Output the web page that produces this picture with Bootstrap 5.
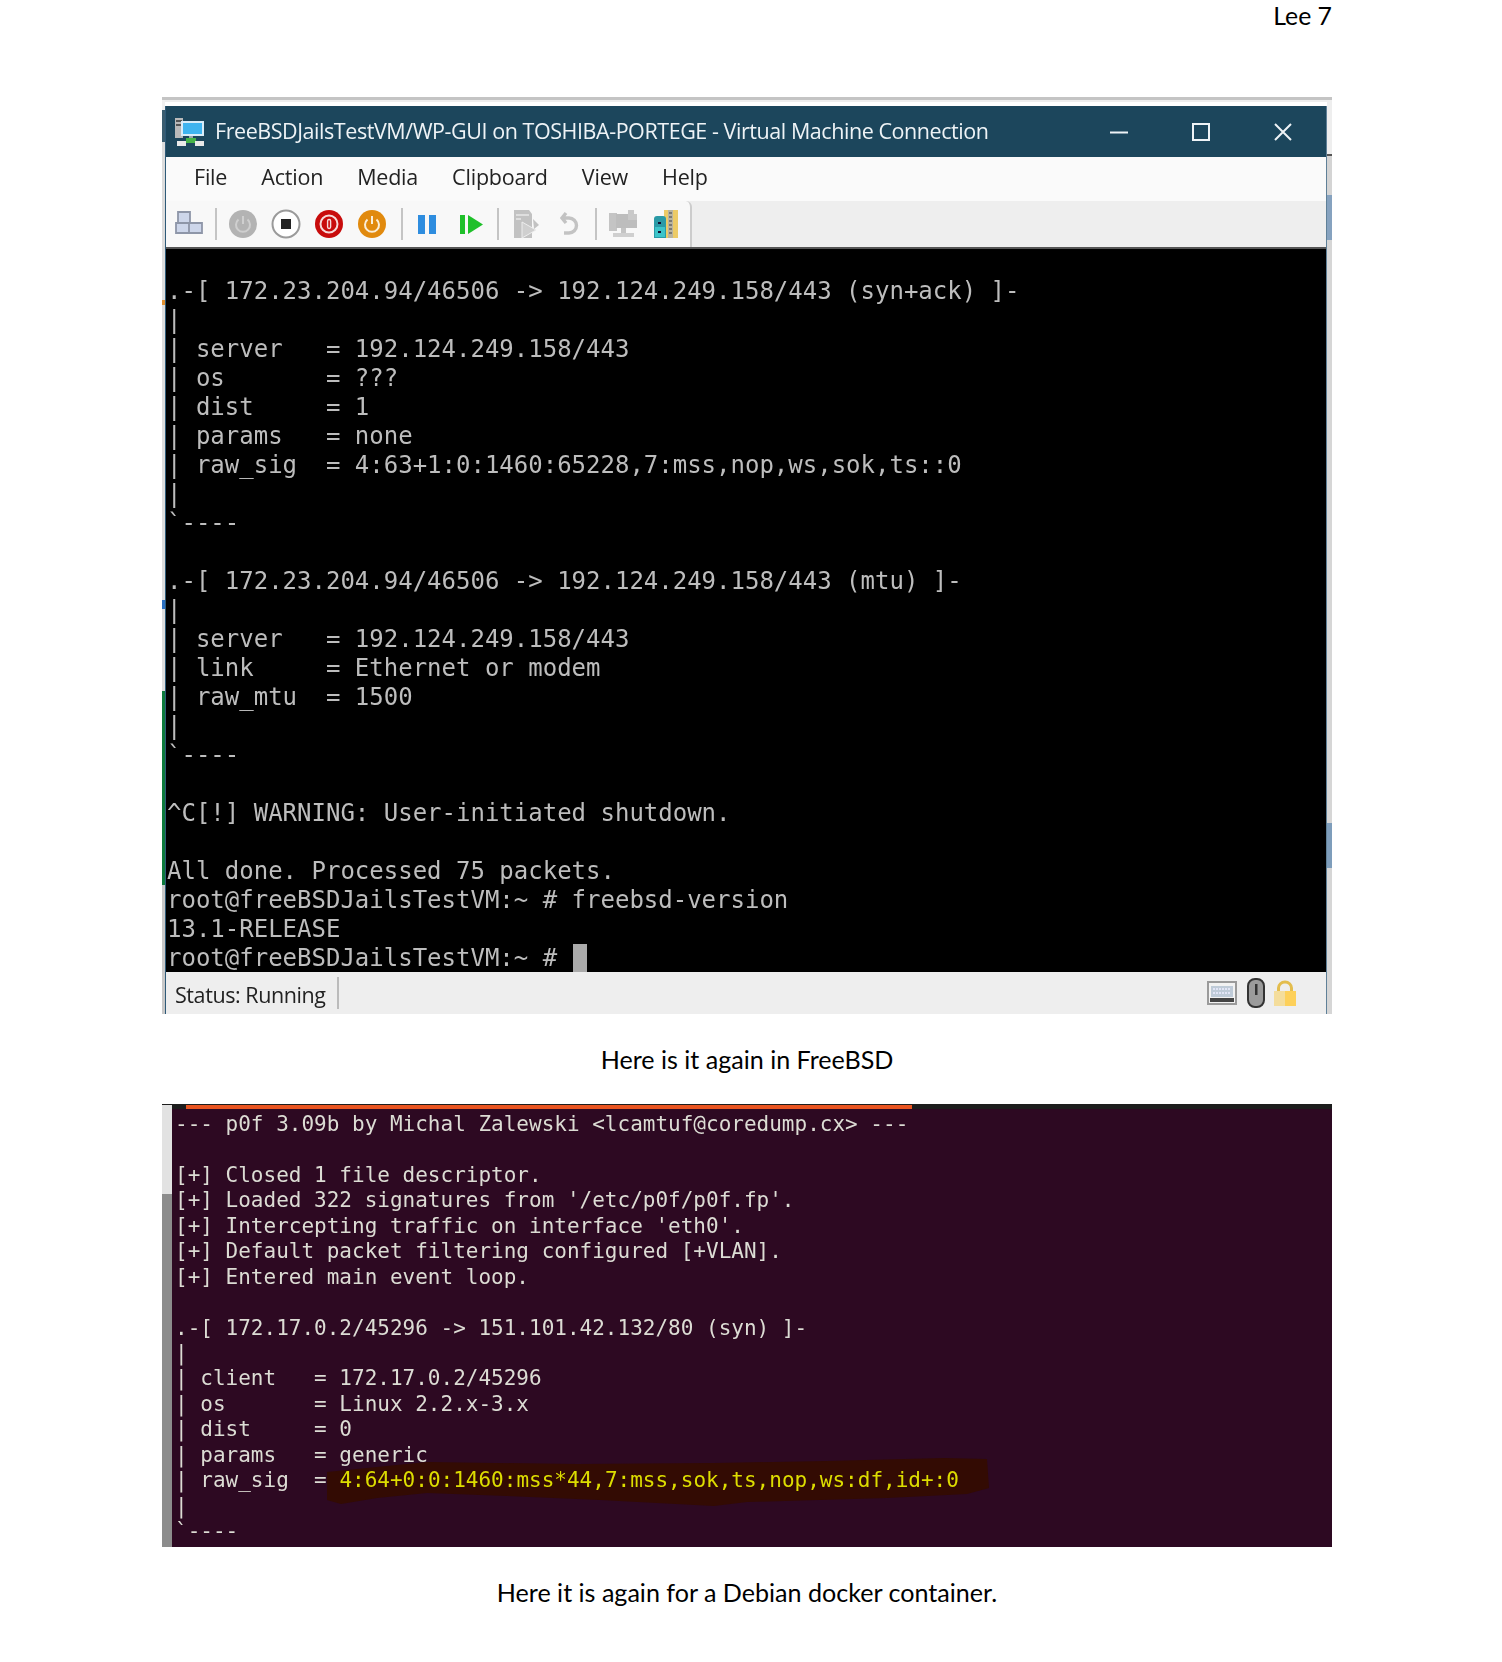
<!DOCTYPE html>
<html lang="en">
<head>
<meta charset="utf-8">
<title>Lee 7</title>
<link href="https://cdn.jsdelivr.net/npm/bootstrap@5.3.0/dist/css/bootstrap.min.css" rel="stylesheet">
<style>
body{background:#fff;color:#000;font-family:"Lato","Liberation Sans",sans-serif;margin:0}
.sheet{width:1170px;margin-left:162px}
.runhead{height:97px;font-size:24.8px;line-height:31px}
.caption-line{height:89.5px;padding-top:28px;font-size:25.1px;line-height:34px}
.shot-one{height:917px;padding:9px 5px 0 3px;background:
  linear-gradient(#c4c4c4 0 3px,#f0f0f0 3px 13px,#3a5d70 13px 45px,#dcdcdc 45px 203px,#e09030 203px 208px,#dcdcdc 208px 503px,#2a6fc0 503px 512px,#dcdcdc 512px 594px,#0d7a3c 594px 788px,#c8c8c8 788px) left top/3px 100% no-repeat,
  linear-gradient(#c4c4c4 0 3px,#eee 3px 57px,#555 57px 59px,#d4d4d4 59px 98px,#86a2bf 98px 143px,#d6d6d6 143px 726px,#7e9dbb 726px 771px,#d6d6d6 771px) right top/5px 100% no-repeat,
  linear-gradient(#c4c4c4 0 3px,#eee 3px 5px,#fff 5px)}
.vm-win{height:908px;overflow:hidden;border-left:1px solid #2e5a78;border-right:1px solid #5f8098}
.vm-title{height:51px;background:#1c465c;color:#eef3f6;font-family:"Open Sans",sans-serif;font-size:21.5px;letter-spacing:-.44px;padding-left:9px;filter:blur(.3px)}
.vm-title .ttl{margin-left:10px}
.ctl{width:82px;text-align:center;line-height:0}
.ctl-zone{margin-right:2px}
.vm-menu{height:44px;background:#fafafa;padding-left:28px;padding-bottom:4px;gap:34px;font-family:"Open Sans",sans-serif;font-size:21.5px;letter-spacing:-.2px;color:#222;filter:blur(.3px)}
.vm-bar{height:48px;background:#eee;border-bottom:2px solid #555}
.vm-tools{height:46px;background:#f8f8f8;padding-left:8px;padding-right:9px;gap:11px;border-right:2px solid #ccc;border-top-right-radius:6px}
.vm-group{gap:13px}
.vm-group.wide-step{gap:14px}
.vm-group svg{width:30px;height:30px;display:block}
.tool-sep{width:2px;height:32px;background:#c4c4c4}
.tool-sep.nudged{margin-left:3px;margin-right:-2px}
.tool-sep.pushed{margin-right:1px}
.vm-screen{height:723px;background:#000;color:#bdbdbd;overflow:hidden;padding:28px 0 0 1px}
.vm-screen pre{margin:0;overflow:visible;font-family:"DejaVu Sans Mono",monospace;font-size:24px;line-height:29px;letter-spacing:0;filter:blur(.5px);color:inherit}
.cursor-block{display:inline-block;width:14px;height:29px;background:#aaa;vertical-align:top;margin-left:1px}
.vm-status{height:42px;background:#eee;font-family:"Open Sans",sans-serif;font-size:21.5px;letter-spacing:-.42px;color:#222;padding-left:9px;padding-right:29px;filter:blur(.3px)}
.vm-status .stat-txt{position:relative;top:2px}
.stat-sep{width:2px;height:32px;background:#bbb;margin-left:11px}
.tray{gap:9px}
.tray .padlock{margin-left:-2px}
.shot-two{height:443px}
.two-edge{width:10px;flex:none;background:linear-gradient(#1d1d1d 0 1px,#e2e2e2 1px 90px,#8c8c8c 90px)}
.two-body{position:relative;flex:1 1 auto;min-width:0;background:#2d0922;overflow:hidden}
.two-band{position:relative;height:5px;background:#1d1d1d}
.stripe{position:absolute;left:14px;top:1px;width:726px;height:4px;background:#e95420}
.smear{position:absolute;left:155px;top:352.500px;width:662px;height:50px;filter:blur(.6px)}
.two-body pre{position:relative;margin:0;overflow:visible;padding:3.5px 0 0 3px;font-family:"DejaVu Sans Mono",monospace;font-size:21px;line-height:25.44px;color:#dcdcd4;filter:blur(.35px)}
.hl{color:#dddd00}
</style>
</head>
<body>
<main class="sheet">
  <div class="runhead text-end">Lee 7</div>

  <section class="shot-one">
    <div class="vm-win d-flex flex-column">
      <div class="vm-title d-flex align-items-center">
        <svg width="30" height="30" viewBox="0 0 30 30" aria-hidden="true">
          <rect x="0" y="1" width="8" height="20" fill="#b9b9b9"/><rect x="1" y="3" width="6" height="2" fill="#555"/><rect x="1" y="7" width="6" height="2" fill="#555"/>
          <rect x="6" y="4" width="23" height="15" fill="#d9ecf8"/><rect x="8" y="6" width="19" height="11" fill="#3fb4ef"/>
          <rect x="14" y="19" width="4" height="5" fill="#9aa5ab"/><rect x="11" y="21" width="10" height="5" fill="#45b348"/>
          <rect x="2" y="24" width="9" height="5" fill="#e9e9e9"/><rect x="20" y="24" width="9" height="5" fill="#e9e9e9"/>
        </svg>
        <span class="ttl">FreeBSDJailsTestVM/WP-GUI on TOSHIBA-PORTEGE - Virtual Machine Connection</span>
        <div class="ctl-zone d-flex ms-auto">
          <div class="ctl"><svg width="20" height="20" viewBox="0 0 20 20"><path d="M1 10.5H19" stroke="#eef3f6" stroke-width="2"/></svg></div>
          <div class="ctl"><svg width="20" height="20" viewBox="0 0 20 20"><rect x="2" y="2" width="16" height="16" fill="none" stroke="#eef3f6" stroke-width="2"/></svg></div>
          <div class="ctl"><svg width="20" height="20" viewBox="0 0 20 20"><path d="M2 2L18 18M18 2L2 18" stroke="#eef3f6" stroke-width="2"/></svg></div>
        </div>
      </div>

      <nav class="vm-menu d-flex align-items-center">
        <span>File</span><span>Action</span><span>Media</span><span>Clipboard</span><span>View</span><span>Help</span>
      </nav>

      <div class="vm-bar">
        <div class="vm-tools d-inline-flex align-items-center">
          <div class="vm-group d-flex">
            <svg viewBox="0 0 30 30" aria-hidden="true"><path d="M4 3h12v11H4zM2 14h13v10H2zM15 14h13v10H15z" fill="#cdd6ea" stroke="#8e96a8" stroke-width="1.8"/></svg>
          </div>
          <i class="tool-sep"></i>
          <div class="vm-group d-flex">
            <svg viewBox="0 0 30 30" aria-hidden="true"><circle cx="15" cy="15" r="14" fill="#b3b3b3"/><path d="M10.500 10.500a7 7 0 1 0 9 0M15 7v8" fill="none" stroke="#cfcfcf" stroke-width="2"/></svg>
            <svg viewBox="0 0 30 30" aria-hidden="true"><circle cx="15" cy="15" r="13.500" fill="#fff" stroke="#9a9a9a" stroke-width="2"/><rect x="10" y="10" width="10" height="10" fill="#222"/></svg>
            <svg viewBox="0 0 30 30" aria-hidden="true"><circle cx="15" cy="15" r="14" fill="#c80c0c"/><circle cx="15" cy="15" r="8.500" fill="none" stroke="#f6dada" stroke-width="2"/><rect x="13.600" y="10.500" width="3" height="9" rx="1.400" fill="none" stroke="#f6dada" stroke-width="1.400"/></svg>
            <svg viewBox="0 0 30 30" aria-hidden="true"><circle cx="15" cy="15" r="14" fill="#e18a0e"/><path d="M10.500 10.500a7 7 0 1 0 9 0M15 7v8" fill="none" stroke="#fbeed8" stroke-width="2"/></svg>
          </div>
          <i class="tool-sep nudged"></i>
          <div class="vm-group wide-step d-flex">
            <svg viewBox="0 0 30 30" aria-hidden="true"><rect x="6" y="6" width="7" height="19" fill="#2e8ddf"/><rect x="17" y="6" width="7" height="19" fill="#2e8ddf"/></svg>
            <svg viewBox="0 0 30 30" aria-hidden="true"><rect x="4" y="6" width="5" height="19" fill="#1fc02a"/><path d="M12 6L27 15.500L12 25Z" fill="#1fc02a"/></svg>
          </div>
          <i class="tool-sep pushed"></i>
          <div class="vm-group d-flex">
            <svg viewBox="0 0 30 30" aria-hidden="true"><path d="M3 1h15l3 4v24H3z" fill="#c2c2c2"/><path d="M5 6h13M5 10h5" stroke="#e8e8e8" stroke-width="1.600"/><path d="M11 13L25 21L11 29Z" fill="#cfcfcf" stroke="#ededed"/><path d="M22 10l6 6-5 4z" fill="#c2c2c2"/></svg>
            <svg viewBox="0 0 30 30" aria-hidden="true"><path d="M12 4L8 9l4 5M8 9h7a7.500 7.500 0 0 1 0 15h-5" fill="none" stroke="#c3c3c3" stroke-width="3.400"/></svg>
          </div>
          <i class="tool-sep"></i>
          <div class="vm-group d-flex">
            <svg viewBox="0 0 30 30" aria-hidden="true"><rect x="1" y="4" width="8" height="18" fill="#c4c4c4"/><rect x="8" y="5" width="21" height="14" fill="#bdbdbd"/><path d="M20 1h6v4h3v6h-9z" fill="#c9c9c9"/><rect x="13" y="19" width="5" height="6" fill="#c4c4c4"/><rect x="5" y="24" width="21" height="4" fill="#cfcfcf"/></svg>
            <svg viewBox="0 0 30 30" aria-hidden="true"><path d="M13 1h14v28H13z" fill="#edcb66"/><rect x="17" y="1" width="5" height="28" fill="#b9b4a0"/><path d="M18 4h3M18 8h3M18 12h3M18 16h3M18 20h3M18 24h3" stroke="#666" stroke-width="1.500"/><path d="M3 10q0-3 3-3h6q3 0 3 3v19H3z" fill="#2a9aa6"/><rect x="4" y="18" width="10" height="10" fill="#3cc4c9"/><rect x="7" y="13" width="3" height="2" fill="#113"/><rect x="7" y="22" width="3" height="2" fill="#113"/></svg>
          </div>
        </div>
      </div>

      <div class="vm-screen">
<pre>.-[ 172.23.204.94/46506 -&gt; 192.124.249.158/443 (syn+ack) ]-
|
| server   = 192.124.249.158/443
| os       = ???
| dist     = 1
| params   = none
| raw_sig  = 4:63+1:0:1460:65228,7:mss,nop,ws,sok,ts::0
|
`----

.-[ 172.23.204.94/46506 -&gt; 192.124.249.158/443 (mtu) ]-
|
| server   = 192.124.249.158/443
| link     = Ethernet or modem
| raw_mtu  = 1500
|
`----

^C[!] WARNING: User-initiated shutdown.

All done. Processed 75 packets.
root@freeBSDJailsTestVM:~ # freebsd-version
13.1-RELEASE
root@freeBSDJailsTestVM:~ # <span class="cursor-block"></span></pre>
      </div>

      <div class="vm-status d-flex align-items-center">
        <span class="stat-txt">Status: Running</span><i class="stat-sep"></i>
        <div class="tray d-flex align-items-center ms-auto">
          <svg width="30" height="24" viewBox="0 0 30 24" aria-hidden="true"><rect x="1" y="1" width="28" height="22" fill="#f2f2f2" stroke="#9a9a9a" stroke-width="2"/><rect x="4" y="5" width="22" height="11" fill="#bfcbd8"/><path d="M6 8h18M6 12h18" stroke="#eef" stroke-width="1.500" stroke-dasharray="2 1"/><rect x="3" y="17" width="24" height="4" fill="#444"/></svg>
          <svg width="20" height="30" viewBox="0 0 20 30" aria-hidden="true"><rect x="2" y="1" width="16" height="28" rx="7" fill="#9b9b9b" stroke="#333" stroke-width="2"/><rect x="9" y="6" width="2.500" height="11" fill="#333"/></svg>
          <svg class="padlock" width="24" height="26" viewBox="0 0 24 26" aria-hidden="true"><path d="M5.500 12V8a6.500 6 0 0 1 13 0v4" fill="none" stroke="#e3bd4e" stroke-width="3"/><rect x="1" y="11" width="11" height="15" fill="#f4dd9c"/><rect x="12" y="11" width="11" height="15" fill="#fdd05a"/></svg>
        </div>
      </div>
    </div>
  </section>

  <p class="caption-line text-center m-0">Here is it again in FreeBSD</p>

  <section class="shot-two d-flex">
    <div class="two-edge"></div>
    <div class="two-body">
      <div class="two-band"><i class="stripe"></i></div>
      <svg class="smear" viewBox="0 0 662 50" preserveAspectRatio="none" aria-hidden="true"><path d="M0 16L40 12L100 6L250 8L387 7L500 5L617 2L660 3L662 32L640 38L560 42L420 46L387 50L330 47L273 44L180 40L100 37L50 42L14 48L0 44Z" fill="#330b03"/></svg>
<pre>--- p0f 3.09b by Michal Zalewski &lt;lcamtuf@coredump.cx&gt; ---

[+] Closed 1 file descriptor.
[+] Loaded 322 signatures from '/etc/p0f/p0f.fp'.
[+] Intercepting traffic on interface 'eth0'.
[+] Default packet filtering configured [+VLAN].
[+] Entered main event loop.

.-[ 172.17.0.2/45296 -&gt; 151.101.42.132/80 (syn) ]-
|
| client   = 172.17.0.2/45296
| os       = Linux 2.2.x-3.x
| dist     = 0
| params   = generic
| raw_sig  = <span class="hl">4:64+0:0:1460:mss*44,7:mss,sok,ts,nop,ws:df,id+:0</span>
|
`----</pre>
    </div>
  </section>

  <p class="caption-line text-center m-0">Here it is again for a Debian docker container.</p>
</main>
<script src="https://cdn.jsdelivr.net/npm/bootstrap@5.3.0/dist/js/bootstrap.bundle.min.js"></script>
</body>
</html>
